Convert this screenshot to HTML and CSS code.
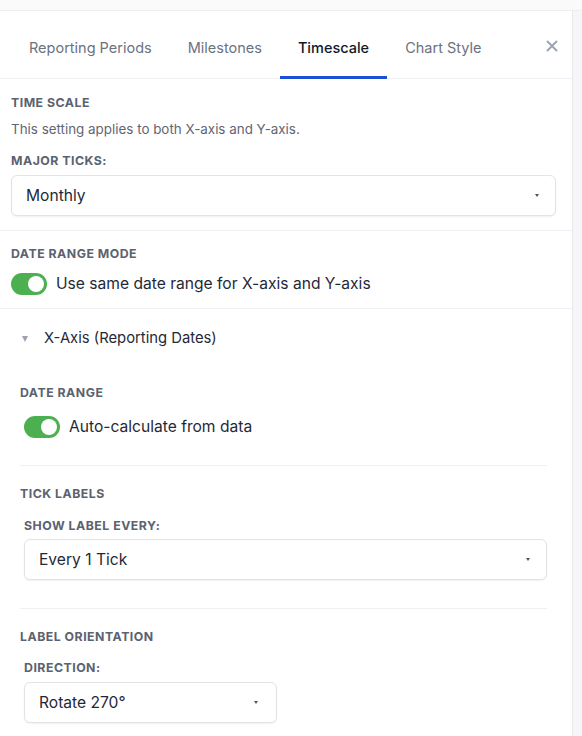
FILE: index.html
```html
<!DOCTYPE html>
<html lang="en">
<head>
<meta charset="utf-8">
<title>Timescale settings</title>
<link rel="stylesheet" href="styles.css">
</head>
<body>
<div class="topbar"></div>
<div class="layout">
  <div class="panel">
    <div class="tabs">
      <div class="tab">Reporting Periods</div>
      <div class="tab">Milestones</div>
      <div class="tab active">Timescale</div>
      <div class="tab">Chart Style</div>
      <button class="close" aria-label="Close">
        <svg width="12" height="12" viewBox="0 0 12 12"><path d="M1.5 1.5 L10.5 10.5 M10.5 1.5 L1.5 10.5" stroke="#9ca3af" stroke-width="1.9" stroke-linecap="round" fill="none"/></svg>
      </button>
    </div>

    <section class="section s1">
      <div class="label">Time Scale</div>
      <p class="desc">This setting applies to both X-axis and Y-axis.</p>
      <div class="label field-label">Major Ticks:</div>
      <div class="select"><span>Monthly</span><i class="arrow"></i></div>
    </section>

    <section class="section s2">
      <div class="label">Date Range Mode</div>
      <div class="toggle-row">
        <span class="toggle"><span class="knob"></span></span>
        <span class="toggle-text">Use same date range for X-axis and Y-axis</span>
      </div>
    </section>

    <div class="accordion">
      <div class="acc-header">
        <i class="caret"></i>
        <span class="acc-title">X-Axis (Reporting Dates)</span>
      </div>
      <div class="acc-body">
        <div class="sub sub1">
          <div class="label">Date Range</div>
          <div class="toggle-row indent">
            <span class="toggle"><span class="knob"></span></span>
            <span class="toggle-text">Auto-calculate from data</span>
          </div>
        </div>
        <div class="sub sub2">
          <div class="label">Tick Labels</div>
          <div class="field indent">
            <div class="label field-label">Show Label Every:</div>
            <div class="select"><span>Every 1 Tick</span><i class="arrow"></i></div>
          </div>
        </div>
        <div class="sub sub3">
          <div class="label">Label Orientation</div>
          <div class="field indent">
            <div class="label field-label">Direction:</div>
            <div class="select narrow"><span>Rotate 270°</span><i class="arrow"></i></div>
          </div>
        </div>
      </div>
    </div>
  </div>
  <div class="side"></div>
</div>
</body>
</html>
```

FILE: styles.css
```css
* { box-sizing: border-box; }
html, body {
  margin: 0;
  padding: 0;
  height: 736px;
  overflow: hidden;
  background: #ffffff;
  font-family: Inter, "Noto Sans", "Liberation Sans", sans-serif;
  color: #1f2937;
}

.topbar {
  height: 11px;
  background: #fafafb;
  border-bottom: 1px solid #eceef1;
  box-shadow: 0 1px 2px rgba(0,0,0,0.04);
}

.layout {
  display: flex;
  height: 725px;
}

.panel {
  width: 573px;
  flex: none;
  background: #fff;
  border-right: 1px solid #e6e8eb;
}

.side {
  flex: 1;
  background: #f5f6f8;
}

/* Tabs */
.tabs {
  display: flex;
  align-items: stretch;
  height: 68px;
  padding-left: 11px;
  padding-right: 14px;
  border-bottom: 1px solid #f0f1f3;
}
.tab {
  display: flex;
  align-items: center;
  padding: 8px 18px 0;
  font-size: 14.5px;
  color: #6b7280;
  border-bottom: 3px solid transparent;
  margin-bottom: -1px;
  white-space: nowrap;
}
.tab.active {
  color: #111827;
  font-weight: 500;
  border-bottom-color: #1d4ed8;
}
.close {
  margin-left: auto;
  align-self: center;
  margin-top: 2px;
  background: none;
  border: 0;
  padding: 0;
  width: 12px;
  height: 12px;
  display: flex;
}

/* Labels */
.label {
  font-size: 12.3px;
  line-height: 16px;
  font-weight: 700;
  letter-spacing: 0.5px;
  text-transform: uppercase;
  color: #5b6270;
}
.desc {
  margin: 9px 0 0;
  font-size: 13.4px;
  line-height: 18px;
  color: #5f6673;
}

/* Sections */
.section {
  border-bottom: 1px solid #eff0f2;
}
.s1 {
  padding: 16px 16px 14px 11px;
}
.s1 .field-label {
  margin-top: 15px;
}
.s1 .select {
  margin-top: 6px;
}
.s2 {
  padding: 15px 16px 13px 11px;
}
.s2 .toggle-row {
  margin-top: 11px;
}

/* Select */
.select {
  display: flex;
  align-items: center;
  height: 41px;
  margin-top: 7px;
  padding: 0 16px 0 14px;
  border: 1px solid #e1e3e7;
  border-radius: 6px;
  background: #fff;
  box-shadow: 0 1px 2px rgba(16,24,40,0.06);
  font-size: 15.6px;
  color: #1f2937;
}
.select span { flex: 1; }
.select.narrow { width: 253px; padding-right: 18px; }
.arrow {
  width: 0;
  height: 0;
  border-left: 2.5px solid transparent;
  border-right: 2.5px solid transparent;
  border-top: 3px solid #4b5563;
}

/* Toggle */
.toggle-row {
  display: flex;
  align-items: center;
  gap: 9px;
}
.toggle {
  position: relative;
  width: 36px;
  height: 22px;
  border-radius: 11px;
  background: #4caf50;
  flex: none;
}
.knob {
  position: absolute;
  top: 3px;
  right: 3px;
  width: 16px;
  height: 16px;
  border-radius: 50%;
  background: #fff;
}
.toggle-text {
  font-size: 15.6px;
  line-height: 22px;
  color: #1f2937;
}

/* Accordion */
.acc-header {
  display: flex;
  align-items: center;
  padding: 2px 0 0 22px;
  height: 56px;
}
.caret {
  width: 0;
  height: 0;
  border-left: 3.5px solid transparent;
  border-right: 3.5px solid transparent;
  border-top: 6px solid #9ca3af;
  margin-right: 16px;
  margin-top: 1px;
}
.acc-title {
  font-size: 14.8px;
  line-height: 20px;
  font-weight: 400;
  color: #1f2937;
}
.acc-body {
  padding: 20px 25px 0 20px;
}
.sub {
  border-bottom: 1px solid #eff0f2;
}
.sub:last-child { border-bottom: 0; }
.sub1 { padding-bottom: 27px; }
.sub1 .toggle-row { margin-top: 15px; }
.sub2 { padding: 20px 0 28px; }
.sub3 { padding: 20px 0 0; }
.indent { padding-left: 4px; }
.field .field-label { margin-top: 16px; }
.sub2 .select { margin-top: 5px; }
.sub3 .field .field-label { margin-top: 15px; }
.sub3 .select { margin-top: 6px; }
```
